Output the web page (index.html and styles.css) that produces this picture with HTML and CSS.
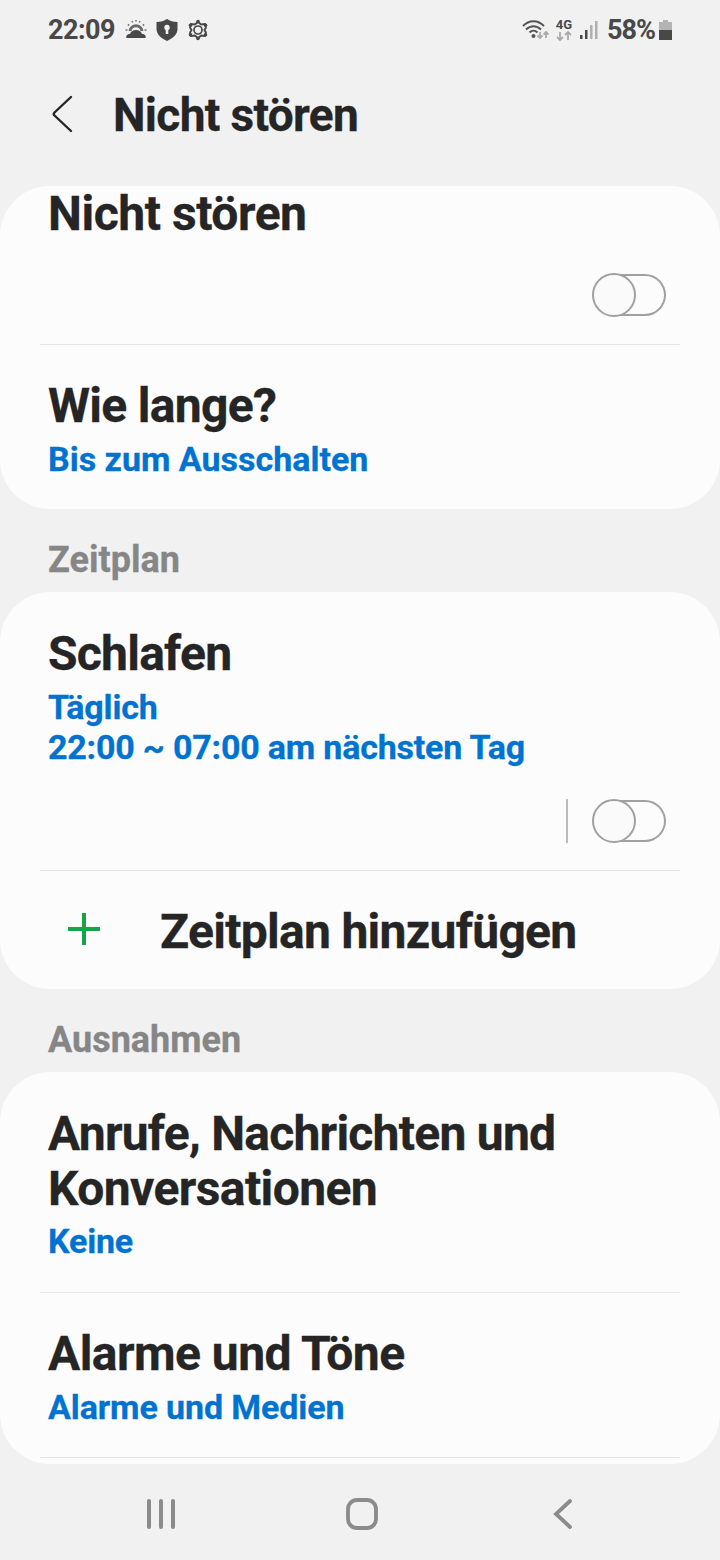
FILE: index.html
```html
<!DOCTYPE html>
<html lang="de">
<head>
<meta charset="utf-8">
<title>Nicht stören</title>
<link rel="stylesheet" href="styles.css">
</head>
<body>
<div class="screen">
  <div class="statusbar">
    <span class="clock">22:09</span>
    <svg class="status-left" width="84" height="24" viewBox="0 0 84 24" fill="none" stroke="#484848">
      <path d="M1.500 20c-.8-2 .5-4 3.500-4 1-2.800 3-4 6-4s5 1.200 6 4c3 0 4.300 2 3.500 4z" fill="#484848" stroke="none"/>
      <path d="M5 13c.8-7 11.200-7 12 0" stroke="#6a6a6a" stroke-width="3"/>
      <path d="M.5 12h2M19.500 12h2M2.800 6.500l1.400 1M19.200 6.500l-1.400 1M7 3l.7 1.500M15 3l-.7 1.500M11 2v1.500" stroke="#777" stroke-width="1.600"/>
      <path d="M42 1c3 2 6 3 10.500 3v7c0 5-4 9-10.500 12C35.500 20 31.500 16 31.500 11V4c4.500 0 7.500-1 10.500-3z" fill="#484848" stroke="none"/>
      <circle cx="42" cy="9.500" r="2.700" fill="#f1f1f1" stroke="none"/><path d="M42 9v7" stroke="#f1f1f1" stroke-width="2.600"/>
      <path d="M73 4l3.200 2.500 4-.6.700 3.800-1.500 2.300 1.500 2.300-.7 3.800-4-.6L73 20l-3.200-2.500-4 .6-.7-3.800 1.500-2.300-1.500-2.300.7-3.800 4 .6z" stroke-width="1.900" stroke-linejoin="round"/>
      <circle cx="73" cy="12" r="4" stroke-width="1.700"/>
      <g fill="#484848" stroke="none"><circle cx="73" cy="3.500" r="1.800"/><circle cx="73" cy="20.500" r="1.800"/><circle cx="65.500" cy="7.300" r="1.800"/><circle cx="65.500" cy="16.700" r="1.800"/><circle cx="80.500" cy="7.300" r="1.800"/><circle cx="80.500" cy="16.700" r="1.800"/></g>
    </svg>
    <svg class="wifi" width="28" height="24" viewBox="0 0 28 24" fill="none" stroke="#555" stroke-width="2">
      <path d="M1 8c6-6.500 15-6.500 21 0M4 11.500c4.500-4.500 10.500-4.500 15 0M7.500 14.500c2.500-2.500 5.500-2.500 8 0"/>
      <circle cx="11.500" cy="18" r="2" fill="#555" stroke="none"/>
      <path d="M18 14v6m-2.500-2.500L18 20l2.500-2.500M24 20v-6m-2.500 2.500L24 14l2.500 2.500" stroke="#aaa" stroke-width="1.800"/>
    </svg>
    <div class="network">
      <span>4G</span>
      <svg width="16" height="10" viewBox="0 0 16 10" fill="none" stroke="#aaa" stroke-width="1.800"><path d="M4 1v8M1 6l3 3 3-3M12 9V1M9 4l3-3 3 3"/></svg>
    </div>
    <svg class="signal" width="18" height="20" viewBox="0 0 18 20"><path d="M0 15h2.500v4H0z" fill="#484848"/><path d="M5 10h2.500v9H5z" fill="#484848"/><path d="M10 5h2.500v14H10zM15 1h2.500v18H15z" fill="#b0b0b0"/></svg>
    <span class="percent">58%</span>
    <svg class="battery" width="14" height="22" viewBox="0 0 14 22"><path d="M0 3h4V1h5v2h4v8H0z" fill="#b4b4b4"/><path d="M0 11h13v10H0z" fill="#484848"/></svg>
  </div>

  <div class="header">
    <svg class="back" width="24" height="40" viewBox="0 0 24 40" fill="none" stroke="#252525" stroke-width="2.400" stroke-linecap="round" stroke-linejoin="round"><path d="M20 3L3.500 18.500q-1.500 1.500 0 3L20 37"/></svg>
    <h1 class="heading">Nicht stören</h1>
  </div>

  <div class="card">
    <div class="row row-dnd">
      <div class="title t-dnd">Nicht stören</div>
      <div class="controls"><div class="switch"><span class="knob"></span></div></div>
    </div>
    <div class="row row-duration">
      <div class="title t-duration">Wie lange?</div>
      <div class="sub s-duration">Bis zum Ausschalten</div>
    </div>
  </div>

  <div class="section">Zeitplan</div>
  <div class="card">
    <div class="row row-sleep">
      <div class="title">Schlafen</div>
      <div class="sub">Täglich</div>
      <div class="sub s-hours">22:00 ~ 07:00 am nächsten Tag</div>
      <div class="controls"><span class="separator"></span><div class="switch"><span class="knob"></span></div></div>
    </div>
    <div class="row row-add">
      <svg class="plus" width="32" height="32" viewBox="0 0 32 32" stroke="#17a349" stroke-width="4"><path d="M0 16h32M16 0v32"/></svg>
      <div class="title t-add">Zeitplan hinzufügen</div>
    </div>
  </div>

  <div class="section">Ausnahmen</div>
  <div class="card card-last">
    <div class="row row-calls">
      <div class="title t-calls">Anrufe, Nachrichten und<br><span class="t-conv">Konversationen</span></div>
      <div class="sub">Keine</div>
    </div>
    <div class="row row-alarms">
      <div class="title t-alarms">Alarme und Töne</div>
      <div class="sub s-media">Alarme und Medien</div>
    </div>
  </div>

  <div class="navbar">
    <svg width="32" height="32" viewBox="0 0 32 32" stroke="#8b8b8b" stroke-width="4" stroke-linecap="round"><path d="M4 3v26M16 3v26M28 3v26"/></svg>
    <svg width="32" height="32" viewBox="0 0 32 32" fill="none" stroke="#8b8b8b" stroke-width="3.800"><rect x="2" y="2" width="28" height="28" rx="9"/></svg>
    <svg width="32" height="32" viewBox="0 0 32 32" fill="none" stroke="#8b8b8b" stroke-width="3.800" stroke-linecap="round"><path d="M23 3L9 16l14 13"/></svg>
  </div>
</div>
</body>
</html>
```
FILE: styles.css
```css
*, *::after { box-sizing: border-box; }
body { margin: 0; background: #f1f1f1; font-family: Roboto, sans-serif; color: #252525; }
.screen { width: 720px; height: 1560px; overflow: hidden; display: flex; flex-direction: column; }
svg { display: block; flex: none; }

.statusbar { height: 60px; padding-left: 48px; display: flex; align-items: center; color: #484848; font-weight: 700; }
.clock, .percent { font-size: 27px; line-height: 32px; white-space: nowrap; }
.clock { width: 67px; letter-spacing: -0.5px; }
.status-left { margin-left: 10px; }
.wifi { margin-left: 313px; }
.network { width: 18px; margin-left: 5px; display: flex; flex-direction: column; align-items: center; font-size: 13px; line-height: 12px; }
.signal { margin-left: 7px; }
.percent { width: 49px; margin-left: 9px; letter-spacing: -1px; }
.battery { margin-left: 3px; }

.header { height: 126px; padding: 27px 0 0 51px; display: flex; align-items: flex-start; }
.back { margin-top: 7px; }
.heading { margin: 0 0 0 38px; font-size: 46px; line-height: 56px; font-weight: 700; letter-spacing: -0.65px; }

.card { background: #fcfcfc; border-radius: 50px; }
.row { margin: 0 40px; padding: 0 8px; }
.row + .row { border-top: 1px solid #e4e4e4; }
.title { font-size: 48px; line-height: 56px; font-weight: 700; letter-spacing: -0.75px; white-space: nowrap; }
.sub { font-size: 34px; line-height: 40px; font-weight: 700; letter-spacing: -0.2px; color: #0072d0; white-space: nowrap; }
.title + .sub { margin-top: 5px; }
.heading, .title, .sub, .section { -webkit-text-stroke: 0.3px currentColor; }
.section { height: 83px; padding: 30px 48px 0; font-size: 36px; line-height: 42px; font-weight: 700; color: #868686; }

.t-dnd { letter-spacing: -0.45px; }
.t-duration, .t-add { letter-spacing: -0.7px; }
.t-calls { line-height: 55px; }
.t-conv { letter-spacing: -0.6px; }
.t-alarms { letter-spacing: -0.55px; }
.s-duration { letter-spacing: 0; }
.s-media { letter-spacing: -0.1px; }

.row-dnd { height: 158px; }
.row-duration { height: 165px; padding-top: 33px; }
.row-sleep { height: 278px; padding-top: 34px; }
.row-add { height: 119px; padding: 4px 8px 0 28px; display: flex; align-items: center; }
.row-calls { height: 221px; padding-top: 34px; }
.row-calls + .row-alarms { height: 166px; padding-top: 33px; border-bottom: 1px solid #e4e4e4; }
.row-calls { height: 220px; }
.card-last { height: 392px; }
.plus { margin: 0 60px 6px 0; }

.controls { display: flex; justify-content: flex-end; align-items: center; gap: 24px; padding-right: 6px; }
.row-dnd .controls { margin-top: 31px; }
.row-sleep .controls { margin-top: 32px; }
.separator { width: 2px; height: 44px; background: #bcbcbc; }
.switch { width: 74px; height: 44px; display: flex; align-items: center; }
.switch::after { content: ""; width: 50px; height: 42px; margin-left: -20px; border: 2px solid #a0a0a0; border-left: 0; border-radius: 0 21px 21px 0; }
.knob { width: 44px; height: 44px; border: 2px solid #a0a0a0; border-radius: 50%; background: #fafafa; z-index: 1; flex: none; }

.navbar { height: 96px; padding: 4px 141px 0 145px; display: flex; align-items: center; justify-content: space-between; }
```
